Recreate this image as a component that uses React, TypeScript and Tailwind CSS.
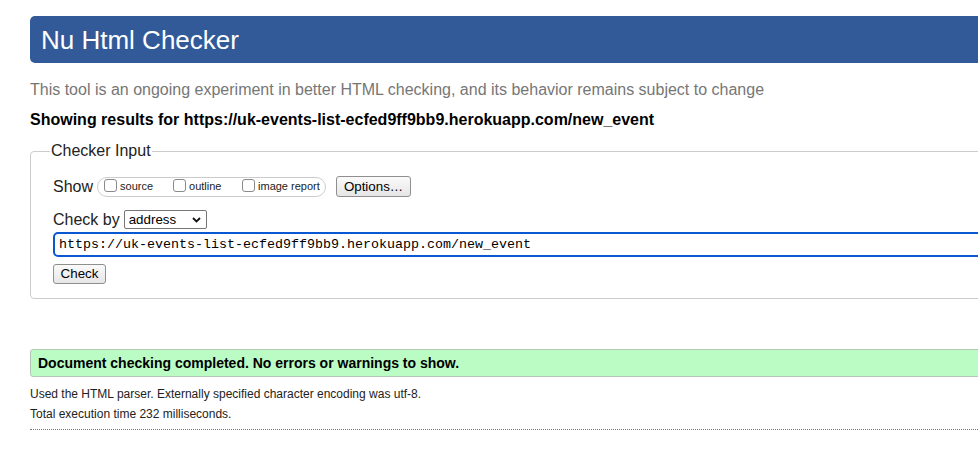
import React from "react";

const URL_TEXT = "https://uk-events-list-ecfed9ff9bb9.herokuapp.com/new_event";

function Box({ label }: { label: string }) {
  return (
    <span className="flex items-center w-[69px] shrink-0">
      <span className="inline-block w-[13px] h-[13px] border border-[#8a8a8a] rounded-[3px] bg-white -mt-[3px]" />
      <span className="ml-[3px] text-[11px] text-[#222] whitespace-nowrap">{label}</span>
    </span>
  );
}

export default function App() {
  return (
    <div className="w-[978px] h-[465px] overflow-hidden bg-white font-['Liberation_Sans',Arial,sans-serif] text-black">
      <div className="w-[1120px] pl-[30px]">
        {/* Titel */}
        <h1 className="mt-[16px] h-[47px] bg-[#325a98] rounded-[5px] pl-[11px] flex items-center text-white text-[26px] leading-none">
          Nu Html Checker
        </h1>

        <p className="mt-[18px] text-[16px] leading-[18px] text-[#767676]">
          This tool is an ongoing experiment in better HTML checking, and its behavior remains subject to change
        </p>
        <p className="mt-[12px] text-[16px] leading-[18px] font-bold">
          Showing results for {URL_TEXT}
        </p>

        {/* Checker Input */}
        <fieldset className="mt-[13px] border border-[#cccccc] rounded-[4px] pl-[22px] pr-[20px] pb-[13px]">
          <legend className="-ml-[3px] px-[1px] text-[16px] leading-[18px] text-[#222]">Checker Input</legend>

          <div className="mt-[16px] flex items-center h-[21px]">
            <span className="text-[16px] text-[#222]">Show</span>
            <div className="ml-[4px] h-[20px] w-[229px] border border-[#cccccc] rounded-full pl-[6px] flex items-center">
              <Box label="source" />
              <Box label="outline" />
              <span className="flex items-center shrink-0">
                <span className="inline-block w-[13px] h-[13px] border border-[#8a8a8a] rounded-[3px] bg-white -mt-[3px]" />
                <span className="ml-[3px] text-[11px] text-[#222] whitespace-nowrap">image report</span>
              </span>
            </div>
            <button className="ml-[10px] h-[21px] w-[75px] border border-[#8f8f8f] rounded-[3px] bg-gradient-to-b from-[#fafafa] to-[#e6e6e6] text-[13.33px] leading-none text-black">
              Options…
            </button>
          </div>

          <div className="mt-[13px] flex items-center h-[19px]">
            <span className="text-[16px] text-[#222]">Check by</span>
            <div className="ml-[4px] h-[19px] w-[83px] border border-[#767676] rounded-[2px] bg-white flex items-center justify-between pl-[4px] pr-[5px]">
              <span className="text-[13.33px] leading-none">address</span>
              <svg width="9" height="6" viewBox="0 0 9 6" className="mt-[1px]">
                <path d="M1 1 L4.5 4.5 L8 1" fill="none" stroke="#111" strokeWidth="1.8" />
              </svg>
            </div>
          </div>

          <div className="mt-[3px] h-[25px] border-2 border-[#0a57d3] rounded-[5px] flex items-center pl-[4px]">
            <span className="font-['Liberation_Mono','Courier_New',monospace] text-[13.33px] leading-none text-black">{URL_TEXT}</span>
          </div>

          <button className="mt-[7px] h-[20px] w-[53px] border border-[#8f8f8f] rounded-[3px] bg-gradient-to-b from-[#fafafa] to-[#e6e6e6] text-[13.33px] leading-none text-black">
            Check
          </button>
        </fieldset>

        {/* Ergebnis */}
        <div className="mt-[50px] h-[28px] bg-[#bbfcc4] border border-[#b5c8b5] rounded-[3px] pl-[7px] flex items-center">
          <span className="text-[14px] font-bold text-black">Document checking completed. No errors or warnings to show.</span>
        </div>

        <p className="mt-[10px] text-[12px] leading-[14px] text-[#222]">
          Used the HTML parser. Externally specified character encoding was utf-8.
        </p>
        <p className="mt-[6px] text-[12px] leading-[14px] text-[#222]">Total execution time 232 milliseconds.</p>
        <div className="mt-[8px] border-t border-dotted border-[#777]" />
      </div>
    </div>
  );
}
